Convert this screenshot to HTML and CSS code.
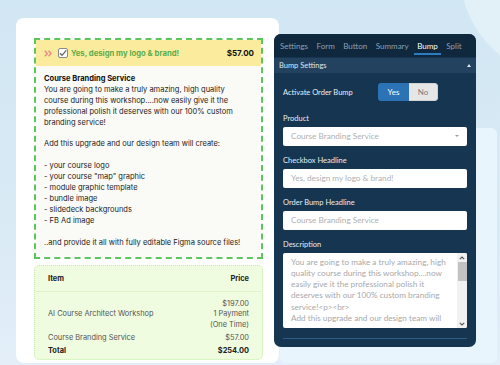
FILE: index.html
```html
<!DOCTYPE html>
<html lang="en">
<head>
  <meta charset="UTF-8">
  <title>Order Bump Editor</title>
  <link rel="stylesheet" href="styles.css">
</head>
<body>

<div class="scene">
  <div class="checkout-card">
    <div class="bump-box">
      <div class="bump-head">
        <svg class="chevrons" width="8" height="7" viewBox="0 0 8 7">
          <polyline points="0.8,0.8 3.3,3.5 0.8,6.2" fill="none" stroke="#f08a8a" stroke-width="1.5"/>
          <polyline points="4.5,0.8 7,3.5 4.5,6.2" fill="none" stroke="#f08a8a" stroke-width="1.5"/>
        </svg>
        <span class="checkbox">
          <svg width="8" height="8" viewBox="0 0 8 8">
            <polyline points="1,4.2 3.1,6.3 7.2,1.4" fill="none" stroke="#666" stroke-width="1.3"/>
          </svg>
        </span>
        <span class="bump-title">Yes, design my logo &amp; brand!</span>
        <span class="bump-price">$57.00</span>
      </div>
      <div class="bump-body">
        <strong>Course Branding Service</strong><br>
        You are going to make a truly amazing, high quality<br>
        course during this workshop....now easily give it the<br>
        professional polish it deserves with our 100% custom<br>
        branding service!<br>
        <br>
        Add this upgrade and our design team will create:<br>
        <br>
        - your course logo<br>
        - your course "map" graphic<br>
        - module graphic template<br>
        - bundle image<br>
        - slidedeck backgrounds<br>
        - FB Ad image<br>
        <br>
        ..and provide it all with fully editable Figma source files!
      </div>
    </div>

    <div class="order-box">
      <div class="order-head">
        <span>Item</span>
        <span>Price</span>
      </div>
      <div class="order-rows">
        <div class="order-row">
          <span>AI Course Architect Workshop</span>
          <span class="price">$197.00<br>1 Payment<br>(One Time)</span>
        </div>
        <div class="order-row">
          <span>Course Branding Service</span>
          <span class="price">$57.00</span>
        </div>
        <div class="order-row total">
          <span>Total</span>
          <span class="price">$254.00</span>
        </div>
      </div>
    </div>
  </div>

  <div class="editor-col">
    <div class="editor">
      <div class="tabs">
        <span class="tab">Settings</span>
        <span class="tab">Form</span>
        <span class="tab">Button</span>
        <span class="tab">Summary</span>
        <span class="tab active">Bump</span>
        <span class="tab">Split</span>
      </div>
      <div class="section-bar">
        <span>Bump Settings</span>
        <span class="caret-up"></span>
      </div>

      <div class="editor-body">
        <div class="toggle-row">
          <span class="toggle-label">Activate Order Bump</span>
          <div class="toggle">
            <span class="toggle-yes">Yes</span>
            <span class="toggle-no">No</span>
          </div>
        </div>

        <div class="field first">
          <div class="field-label">Product</div>
          <div class="input select">
            <span>Course Branding Service</span>
            <span class="caret-down"></span>
          </div>
        </div>

        <div class="field">
          <div class="field-label">Checkbox Headline</div>
          <div class="input">Yes, design my logo &amp; brand!</div>
        </div>

        <div class="field">
          <div class="field-label">Order Bump Headline</div>
          <div class="input">Course Branding Service</div>
        </div>

        <div class="field">
          <div class="field-label">Description</div>
          <div class="textarea">
            <div class="textarea-text">
              You are going to make a truly amazing, high<br>
              quality course during this workshop....now<br>
              easily give it the professional polish it<br>
              deserves with our 100% custom branding<br>
              service!&lt;p&gt;&lt;br&gt;<br>
              Add this upgrade and our design team will
            </div>
            <div class="scrollbar">
              <svg width="6" height="4" viewBox="0 0 6 4"><polyline points="0.8,3.2 3,1 5.2,3.2" fill="none" stroke="#555" stroke-width="1.1"/></svg>
              <div class="thumb"></div>
              <svg class="down" width="6" height="4" viewBox="0 0 6 4"><polyline points="0.8,0.8 3,3 5.2,0.8" fill="none" stroke="#555" stroke-width="1.1"/></svg>
            </div>
          </div>
        </div>

        <div class="divider"></div>
      </div>
    </div>
  </div>
</div>

</body>
</html>
```

FILE: styles.css
```css
body {
  margin: 0;
  font-family: Inter, "Noto Sans", sans-serif;
  background:
    radial-gradient(circle at 570px -30px, #e2f0f8 0, #e2f0f8 110px, transparent 111px),
    linear-gradient(180deg, #d1e7f3 0%, #d9eaf5 60%, #e3eef8 100%);
}

.scene {
  display: flex;
  align-items: flex-start;
  height: 365px;
  padding: 18px 0 0 16px;
  box-sizing: border-box;
  overflow: hidden;
}

/* checkout preview */

.checkout-card {
  flex-shrink: 0;
  width: 263px;
  height: 345px;
  padding: 20px 16px 0 18px;
  box-sizing: border-box;
  background: #fff;
  border-radius: 8px;
}

.bump-box {
  border: 2px dashed #5cc65c;
}

.bump-head {
  display: flex;
  align-items: center;
  height: 26px;
  padding: 0 7px 0 8px;
  background: #fbeb9c;
  font-size: 7.7px;
  font-weight: 700;
}

.chevrons {
  margin-right: 6px;
}

.checkbox {
  display: flex;
  align-items: center;
  justify-content: center;
  width: 10px;
  height: 10px;
  box-sizing: border-box;
  border: 1px solid #8a8a8a;
  border-radius: 2px;
  background: #fff;
  margin-right: 3px;
}

.bump-title {
  color: #5dab4c;
}

.bump-price {
  margin-left: auto;
  color: #111;
  font-size: 8px;
}

.bump-body {
  padding: 8px 8px 8px;
  background: #fafaf6;
  font-size: 7.5px;
  line-height: 10.9px;
  color: #222;
}

.bump-body strong {
  font-weight: 700;
  color: #111;
}

.order-box {
  margin-top: 6px;
  border: 1px dotted #c6ecaf;
  border-radius: 5px;
  background: #effcdf;
  font-size: 7.4px;
  color: #555;
}

.order-head {
  display: flex;
  justify-content: space-between;
  height: 25px;
  align-items: center;
  padding: 0 13px;
  border-bottom: 1px solid #e0f5cc;
  font-weight: 700;
  color: #222;
}

.order-rows {
  padding: 7px 13px 0;
}

.order-row {
  display: flex;
  justify-content: space-between;
  align-items: center;
  line-height: 10.5px;
  margin-bottom: 2.5px;
}

.order-row .price {
  text-align: right;
}

.order-row.total {
  font-weight: 700;
  color: #222;
}

/* editor panel */

.editor-col {
  position: relative;
  flex-shrink: 0;
  width: 223px;
  margin-left: -5px;
}

.editor-col::before {
  content: "";
  position: absolute;
  left: 6px;
  right: 0;
  top: 110px;
  height: 235px;
  background: #e8f5fc;
  border-radius: 6px;
}

.editor {
  position: relative;
  width: 202px;
  margin-top: 16px;
  padding-bottom: 8px;
  background: #163550;
  border-radius: 7px;
  font-family: Lato, "Open Sans", sans-serif;
  font-size: 7.5px;
}

.tabs {
  display: flex;
  gap: 8.5px;
  height: 23px;
  padding-left: 6px;
  background: #10283d;
  border-radius: 7px 7px 0 0;
  font-size: 8px;
}

.tab {
  display: flex;
  align-items: center;
  color: #8aa0b5;
}

.tab.active {
  color: #fff;
  padding: 4px 3px 0;
  margin: 0 -3px 2px;
  border-bottom: 2px solid #2b7cc0;
}

.section-bar {
  display: flex;
  align-items: center;
  justify-content: space-between;
  height: 15px;
  margin-top: 1px;
  padding: 0 5px;
  background: #22425f;
  color: #dfe7ef;
}

.caret-up {
  width: 0;
  height: 0;
  border-left: 2.5px solid transparent;
  border-right: 2.5px solid transparent;
  border-bottom: 3px solid #dfe7ef;
}

.editor-body {
  padding: 10px 9px 0;
}

.toggle-row {
  display: flex;
  align-items: center;
  height: 18px;
}

.toggle-label {
  width: 95px;
  color: #e9eff5;
}

.toggle {
  display: flex;
  height: 18px;
  border-radius: 3px;
  overflow: hidden;
  font-size: 8px;
}

.toggle span {
  display: flex;
  align-items: center;
  justify-content: center;
}

.toggle-yes {
  width: 31px;
  background: #2c73b5;
  color: #fff;
}

.toggle-no {
  width: 29px;
  box-sizing: border-box;
  border: 1px solid #d2d2d2;
  border-left: none;
  border-radius: 0 3px 3px 0;
  background: #e6e6e6;
  color: #7a7a7a;
}

.field {
  margin-top: 9px;
}

.field.first {
  margin-top: 11.5px;
}

.field-label {
  line-height: 11px;
  margin-bottom: 3px;
  color: #e6edf3;
}

.input {
  display: flex;
  align-items: center;
  height: 19px;
  padding: 0 8px;
  background: #fff;
  border-radius: 2px;
  color: #b0b0b0;
  font-size: 8.2px;
}

.select {
  justify-content: space-between;
}

.caret-down {
  width: 0;
  height: 0;
  border-left: 2px solid transparent;
  border-right: 2px solid transparent;
  border-top: 2.5px solid #999;
}

.textarea {
  display: flex;
  height: 75px;
  background: #fff;
  border-radius: 2px;
  overflow: hidden;
  font-size: 8.2px;
}

.textarea-text {
  flex: 1;
  padding: 4px 0 0 8px;
  line-height: 11.3px;
  color: #a9a9a9;
  white-space: nowrap;
}

.scrollbar {
  display: flex;
  flex-direction: column;
  align-items: center;
  width: 10px;
  padding: 3px 0 2px;
  box-sizing: border-box;
  background: #f1f1f1;
}

.thumb {
  width: 9px;
  height: 19px;
  margin-top: 2px;
  background: #c2c2c2;
}

.scrollbar .down {
  margin-top: auto;
}

.divider {
  height: 1px;
  margin-top: 10px;
  background: #2b5d88;
}
```
